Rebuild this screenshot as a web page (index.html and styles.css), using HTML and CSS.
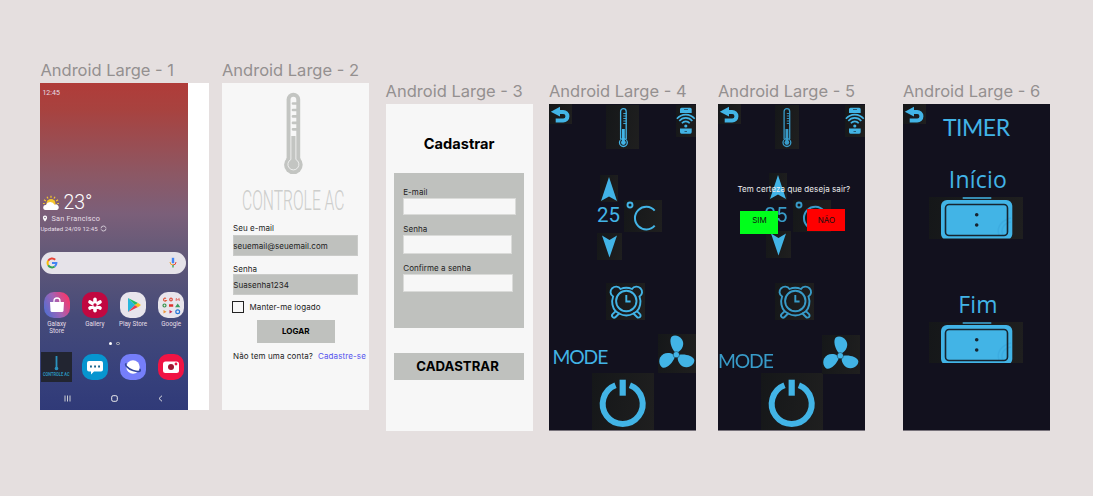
FILE: index.html
```html
<!DOCTYPE html>
<html lang="pt-BR">
<head>
<meta charset="utf-8">
<title>Controle AC</title>
<link rel="stylesheet" href="styles.css">
</head>
<body>
<svg class="defs" aria-hidden="true">
  <symbol id="back" viewBox="0 0 23 20"><path d="M9 8H14.2a4.25 4.25 0 0 1 0 8.500H6.700" fill="none" stroke="currentColor" stroke-width="4"/><path d="M1.800 7.700 11 2.800V12.600Z" fill="currentColor"/></symbol>
  <symbol id="thermo" viewBox="0 0 33 44"><path d="M14.600 34V6.500a2.800 2.800 0 0 1 5.600 0V34" fill="none" stroke="currentColor" stroke-width="1.300"/><circle cx="17.400" cy="37.600" r="3.900" fill="none" stroke="currentColor" stroke-width="1.300"/><circle cx="17.400" cy="37.600" r="2.400" fill="currentColor"/><path d="M17.400 24V37" stroke="currentColor" stroke-width="2.800"/><path d="M17.300 8.500h3M17.300 11h3M17.300 13.500h3M17.300 16h3M17.300 18.500h3" stroke="currentColor" stroke-width=".9"/></symbol>
  <symbol id="remote" viewBox="0 0 20 32"><path d="M4 8V4.200Q4 2.700 5.500 2.700h8.700q1.500 0 1.500 1.500V8ZM4 23.500h11.700V27q0 1.700-1.500 1.700H5.500Q4 28.700 4 27Z" fill="currentColor"/><path d="M8 4.500h4M8.500 26.500h2.500" stroke="#16202a" stroke-width=".6"/><circle cx="9.800" cy="21" r="1.600" fill="currentColor"/><g fill="none" stroke="currentColor" stroke-width="1.600"><path d="M5.900 18.200a5 5 0 0 1 7.800 0M3.300 16a8.300 8.300 0 0 1 13 0M.9 13.800a11.500 11.500 0 0 1 17.800 0"/></g></symbol>
  <symbol id="up" viewBox="0 0 18 27"><path d="M9 2 17 26 9 21.500 1 26Z" fill="currentColor"/></symbol>
  <symbol id="down" viewBox="0 0 25 27"><path d="M5 2.500 12.500 7 20 2.500 12.500 24.500Z" fill="currentColor"/></symbol>
  <symbol id="celsius" viewBox="0 0 38 32"><circle cx="6" cy="5" r="2.500" fill="none" stroke="currentColor" stroke-width="1.900"/><path d="M30.700 10.600A11.300 11.300 0 1 0 30.700 25.600" fill="none" stroke="currentColor" stroke-width="2"/></symbol>
  <symbol id="alarm" viewBox="0 0 39 37"><g fill="none" stroke="currentColor" stroke-width="1.900"><circle cx="20.300" cy="18" r="10.200"/><path d="M14.500 6A14 14 0 0 1 26 6C28 3 32 3 34.400 5.200 37 8 36.500 11.500 33.500 13.500 35.500 19 34 25 31 28.200L34 31.200A2 2 0 0 1 31 34L27.500 30.500A15 15 0 0 1 13.100 30.500L9.600 34A2 2 0 0 1 6.600 31.200L9.600 28.200C6.600 25 5.100 19 7.100 13.500 4.100 11.500 3.600 8 6.200 5.200 8.600 3 12.600 3 14.500 6Z"/><path d="M20.300 12V18.500H24.600"/><path d="M9.600 28.200 13.100 30.500M31 28.200 27.500 30.500"/></g></symbol>
  <symbol id="fan" viewBox="0 0 38 39"><g fill="currentColor"><circle cx="18.300" cy="20.700" r="2.900"/><path id="blade" d="M17 18.200C13 14 10.800 5.500 13.800 2.500 16.500.5 21.500 1.500 24 5.500 26.800 10 24.500 15.500 20 18.200Z"/><use href="#blade" transform="rotate(120 18.300 20.700)"/><use href="#blade" transform="rotate(240 18.300 20.700)"/></g><circle cx="18.300" cy="20.700" r="3.200" fill="none" stroke="#1d3b48" stroke-width=".5"/></symbol>
  <symbol id="power" viewBox="0 0 62 58"><path d="M37.900 12.300A20 20 0 1 1 23.500 12.300" fill="none" stroke="currentColor" stroke-width="6"/><path d="M30.700 6.700v16" stroke="currentColor" stroke-width="6.200"/></symbol>
  <symbol id="clock" viewBox="0 0 94 41.500"><path d="M33.700 1h28.600" stroke="currentColor" stroke-width="1.400"/><rect x="12" y="3" width="71.300" height="40" rx="6" fill="currentColor"/><path d="M70 38C67 30 73 23 82 21M74 38C71 32 75 26 82 25" fill="none" stroke="#3dace0" stroke-width="1.500"/><rect x="16.500" y="7.500" width="62" height="31" rx="3.500" fill="none" stroke="#172530" stroke-width="1.600"/><circle cx="47.700" cy="17.700" r="1.800" fill="#172530"/><circle cx="47.700" cy="28" r="1.800" fill="#172530"/></symbol>
</svg>

<main class="canvas">
  <section class="frame frame-1">
    <h2 class="frame-name">Android Large - 1</h2>
    <div class="screen phone"><div class="wallpaper">
      <div class="status">12:45</div>
      <div class="weather"><svg width="18" height="16" viewBox="0 0 18 16"><circle cx="9" cy="8.500" r="4.500" fill="#f6c72d"/><path d="M9 .7v2M5 1.700l1 1.800M13 1.700l-1 1.800M2 4.700l1.800 1.200M16 4.700l-1.800 1.200M1 8.500h1.800M15.200 8.500H17" stroke="#f6c72d" stroke-width="1.200"/><path d="M3.500 15a2.500 2.500 0 0 1 .4-5 4.700 4.700 0 0 1 8.600-.3A2.700 2.700 0 0 1 15 15Z" fill="#fff"/></svg><span>23°</span></div>
      <div class="place"><svg width="6" height="7" viewBox="0 0 6 7"><path d="M3 .5a2.100 2.100 0 0 0-2.100 2.200C.9 4.300 3 6.500 3 6.500s2.100-2.200 2.100-3.800A2.100 2.100 0 0 0 3 .5Z" fill="#fff"/><circle cx="3" cy="2.600" r=".8" fill="#796078"/></svg><span>San Francisco</span></div>
      <div class="updated"><span>Updated 24/09 12:45</span><svg width="7" height="7" viewBox="0 0 7 7"><circle cx="3.500" cy="3.500" r="2.500" fill="none" stroke="#e6dfe7" stroke-width=".8" stroke-dasharray="6.800 1.050"/></svg></div>
      <div class="search">
        <svg width="12" height="12" viewBox="0 0 12 12" fill="none" stroke-width="2"><path d="M9.200 2.700A4.400 4.400 0 0 0 2.200 3.800" stroke="#e84335"/><path d="M2.200 3.800a4.400 4.400 0 0 0 0 4.400" stroke="#fabc05"/><path d="M2.200 8.200a4.400 4.400 0 0 0 6.500 1.300" stroke="#34a353"/><path d="M8.700 9.500A4.400 4.400 0 0 0 10.400 6H6" stroke="#4285f4"/></svg>
        <svg width="8" height="11" viewBox="0 0 8 11" fill="none"><path d="M4 .8v5.400" stroke="#4285f4" stroke-width="2.400"/><path d="M1 5a3 3 0 0 0 3 3" stroke="#f0a32c"/><path d="M4 8a3 3 0 0 0 3-3" stroke="#e84335"/><path d="M4 8v2.500" stroke="#34a853" stroke-width="1.300"/></svg>
      </div>
      <div class="apps">
        <div class="app"><span class="icon store"><svg width="26" height="26" viewBox="0 0 26 26"><path d="M6 10h14l-.5 8.500Q19.400 20 18 20H8q-1.400 0-1.500-1.500Z" fill="#fff"/><path d="M10 10.500V9a3 3 0 0 1 6 0v1.500" fill="none" stroke="#fff" stroke-width="1.300"/></svg></span>Galaxy<br>Store</div>
        <div class="app"><span class="icon gallery"><svg width="26" height="26" viewBox="0 0 26 26"><path d="M13 7.300v11.400M8 10l10 6M8 16l10-6" stroke="#fff" stroke-width="3.600" stroke-linecap="round"/><circle cx="13" cy="13" r="1.700" fill="#c10840"/></svg></span>Gallery</div>
        <div class="app"><span class="icon light"><svg width="26" height="26" viewBox="0 0 26 26"><path d="M8 6v14l7-7Z" fill="#27b6dc"/><path d="M8 6l10 5-3 2Z" fill="#22bd6c"/><path d="M8 20l10-5-3-2Z" fill="#e93c50"/><path d="M18 11l3 2-3 2.200L14.800 13Z" fill="#fabf20"/></svg></span>Play Store</div>
        <div class="app"><span class="icon light"><svg width="26" height="26" viewBox="0 0 26 26" fill="none" stroke-width="1.200"><path d="M8 6.500a1.500 1.500 0 1 0 .3 2H7" stroke="#e05a3d"/><circle cx="13" cy="7.500" r="1.300" stroke="#df5040"/><path d="M18.200 9V6.500l1.500 1.300 1.500-1.300V9" stroke="#d94a40" stroke-width=".8"/><circle cx="6.500" cy="13.500" r="1.500" stroke="#35924a"/><path d="M11 13.500h4.200" stroke="#e0302d" stroke-width="2.600"/><path d="M18.200 14.700l1.500-2.200 1.500 2.200Z" stroke="#3c9c62"/><path d="M5.500 18l3 1.700-3 1.700Z" fill="#ec943a"/><path d="M11.500 18l3 1.700-3 1.700Z" fill="#c42654"/><circle cx="19.700" cy="19.700" r="1.900" stroke="#2676d9"/></svg></span>Google</div>
      </div>
      <div class="pages"><i></i><i class="off"></i></div>
      <div class="dock">
        <span class="ac"><svg width="31" height="30" viewBox="0 0 31 30"><path d="M15.500 4v14" stroke="#2b91bd" stroke-width="1.800"/><circle cx="15.500" cy="16.500" r="1.800" fill="#2b91bd"/><text x="2" y="23.500" textLength="26.500" lengthAdjust="spacingAndGlyphs">CONTROLE AC</text></svg></span>
        <span class="icon chat"><svg width="26" height="26" viewBox="0 0 26 26"><path d="M7 7h12q2 0 2 2v6.500q0 2-2 2h-7L9 20.500v-3H7q-2 0-2-2V9q0-2 2-2Z" fill="#fff"/><path d="M8 12.500h1.900M12.100 12.500H14M16.100 12.500H18" stroke="#18658d" stroke-width="1.900"/></svg></span>
        <span class="icon planet"><svg width="26" height="26" viewBox="0 0 26 26"><circle cx="13" cy="13" r="6.700" fill="#fff"/><path d="M6.500 9.500C3.500 10 8 15 13 16.500S22 18 19.700 15" fill="none" stroke="#35479d" stroke-width="1.500"/></svg></span>
        <span class="icon camera"><svg width="26" height="26" viewBox="0 0 26 26"><rect x="5" y="7.500" width="16" height="11.500" rx="2.500" fill="#fff"/><circle cx="13" cy="13" r="3" fill="#9f1732"/><circle cx="18" cy="10" r="1.400" fill="#e61845"/></svg></span>
      </div>
      <div class="nav"><svg width="7" height="7" viewBox="0 0 7 7"><path d="M1 .5v6M3.500.5v6M6 .5v6" stroke="#ddd" stroke-width=".9"/></svg><svg width="7" height="7" viewBox="0 0 7 7"><rect x=".7" y=".7" width="5.600" height="5.600" rx="1.500" fill="none" stroke="#eee"/></svg><svg width="7" height="7" viewBox="0 0 7 7"><path d="M5 .7 2 3.500 5 6.300" fill="none" stroke="#eee" stroke-width=".9"/></svg></div>
    </div></div>
  </section>

  <section class="frame frame-2">
    <h2 class="frame-name">Android Large - 2</h2>
    <div class="screen login">
      <svg class="logo" width="110" height="122" viewBox="0 0 110 122"><g fill="#c3c5c2"><path d="M44.600 75V8.500a6.800 6.800 0 0 1 13.600 0V75Z"/><circle cx="51.400" cy="73.800" r="9.300"/></g><path d="M48.500 45V8.700a2.900 2.900 0 0 1 5.800 0V45Z" fill="#f7f7f7"/><path d="M55 12.500h-4M55 19h-4M55 25.400h-4M55 31.900h-4M55 38.300h-4" stroke="#c3c5c2" stroke-width="2.700" stroke-linecap="round"/><path d="M48.900 45V68.500a5.500 5.500 0 1 0 5 0V45" fill="none" stroke="#f7f7f7" stroke-width=".8"/><text x="0" y="118.500" textLength="102.500" lengthAdjust="spacingAndGlyphs">CONTROLE AC</text></svg>
      <label class="first">Seu e-mail</label><div class="field">seuemail@seuemail.com</div>
      <label>Senha</label><div class="field">Suasenha1234</div>
      <div class="remember"><i></i><span>Manter-me logado</span></div>
      <div class="enter">LOGAR</div>
      <p class="signup"><span>Não tem uma conta?</span><a>Cadastre-se</a></p>
    </div>
  </section>

  <section class="frame frame-3">
    <h2 class="frame-name">Android Large - 3</h2>
    <div class="screen register">
      <h1>Cadastrar</h1>
      <div class="panel">
        <label>E-mail</label><div class="input email"></div>
        <label>Senha</label><div class="input password"></div>
        <label>Confirme a senha</label><div class="input confirm"></div>
      </div>
      <div class="submit">CADASTRAR</div>
    </div>
  </section>

  <section class="frame frame-4">
    <h2 class="frame-name">Android Large - 4</h2>
    <div class="screen dark">
      <div class="top"><svg class="tile t-back"><use href="#back"/></svg><svg class="tile t-thermo"><use href="#thermo"/></svg><svg class="tile t-remote"><use href="#remote"/></svg></div>
      <div class="temp"><svg class="tile t-up"><use href="#up"/></svg><div class="value"><span>25</span><svg class="tile t-c"><use href="#celsius"/></svg></div><svg class="tile t-down"><use href="#down"/></svg></div>
      <svg class="tile t-alarm"><use href="#alarm"/></svg>
      <div class="mode"><span>MODE</span><svg class="tile t-fan"><use href="#fan"/></svg></div>
      <svg class="tile t-power"><use href="#power"/></svg>
    </div>
  </section>

  <section class="frame frame-5">
    <h2 class="frame-name">Android Large - 5</h2>
    <div class="screen dark">
      <div class="behind">
      <div class="top"><svg class="tile t-back"><use href="#back"/></svg><svg class="tile t-thermo" viewBox="5.500 0 23.500 44"><use href="#thermo" width="33" height="44"/></svg><svg class="tile t-remote"><use href="#remote"/></svg></div>
      <div class="temp"><svg class="tile t-up"><use href="#up"/></svg><div class="value"><span>25</span><svg class="tile t-c"><use href="#celsius"/></svg></div><svg class="tile t-down"><use href="#down"/></svg></div>
      <svg class="tile t-alarm"><use href="#alarm"/></svg>
      <div class="mode"><span>MODE</span><svg class="tile t-fan"><use href="#fan"/></svg></div>
      <svg class="tile t-power"><use href="#power"/></svg>
      </div>
      <div class="dialog"><p>Tem certeza que deseja sair?</p><div class="answers"><span class="yes">SIM</span><span class="no">NÃO</span></div></div>
    </div>
  </section>

  <section class="frame frame-6">
    <h2 class="frame-name">Android Large - 6</h2>
    <div class="screen dark">
      <div class="timer-head"><svg class="tile t-back"><use href="#back"/></svg><h1>TIMER</h1></div>
      <h3 class="start">Início</h3><svg class="tile t-clock"><use href="#clock"/></svg>
      <h3 class="end">Fim</h3><svg class="tile t-clock"><use href="#clock"/></svg>
    </div>
  </section>
</main>
</body>
</html>
```
FILE: styles.css
```css
* { box-sizing: border-box; }
body { margin: 0; background: #e5dfdf; font-family: Inter, sans-serif; }
h1, h2, h3, p { margin: 0; font-weight: 400; }
svg { display: block; flex: none; }
.defs { position: absolute; width: 0; height: 0; }
.canvas { display: flex; align-items: flex-start; width: 1093px; height: 496px; padding: 60px 0 0 40.4px; overflow: hidden; }
.frame { flex: none; width: 147px; }
.frame-1 { width: 168.500px; margin-right: 13.100px; }
.frame-2 { margin-right: 16.600px; }
.frame-3, .frame-4, .frame-5, .frame-6 { padding-top: 21.500px; }
.frame-3 { margin-right: 16.400px; }
.frame-4 { margin-right: 22px; }
.frame-5 { margin-right: 38px; }
.frame-name { height: 22.600px; line-height: 20px; font-size: 16.500px; color: #949090; white-space: nowrap; }
.frame-3 .frame-name, .frame-4 .frame-name, .frame-5 .frame-name, .frame-6 .frame-name { height: 22.500px; line-height: 18px; }
.screen { height: 327px; overflow: hidden; }

/* home screen */
.phone { background: #fff; font-family: Roboto, sans-serif; color: #e6dfe7; }
.wallpaper { width: 147.300px; height: 327px; overflow: hidden; background: linear-gradient(#b03c39, #a8423f 8%, #8c5865 28%, #7b5f79 40%, #635978 52%, #454a79 72%, #36407b 90%, #303a78); }
.status { padding: 6px 0 0 2px; font-size: 7px; line-height: 9px; }
.weather { display: flex; align-items: center; gap: 3px; height: 22px; margin: 94px 0 0 2px; font-size: 19.500px; font-weight: 300; color: #fff; }
.place { display: flex; align-items: center; gap: 3px; height: 10px; margin-left: 2px; font-size: 7.300px; letter-spacing: .24px; }
.updated { display: flex; align-items: center; gap: 2px; height: 10px; font-size: 6.100px; white-space: nowrap; }
.search { display: flex; align-items: center; justify-content: space-between; width: 145px; height: 21.500px; margin: 18.500px 1px 0; padding: 0 9px 0 5px; border-radius: 11px; background: #e6e3e9; }
.apps, .dock { display: grid; grid-template-columns: repeat(4, 38.200px); margin-left: -2.800px; }
.apps { height: 45px; margin-top: 18px; }
.app { display: flex; flex-direction: column; align-items: center; font-size: 6.300px; line-height: 7px; text-align: center; }
.icon { display: block; flex: none; width: 26px; height: 26px; margin-bottom: 3px; border-radius: 10px; overflow: hidden; }
.store { background: linear-gradient(65deg, #4c6fd2 5%, #a263b5 50%, #ef3b72 85%); }
.gallery { background: #c10840; }
.light { background: #e8e5ec; }
.chat { background: #0795cf; }
.planet { background: #757efa; }
.camera { background: #f01444; }
.pages { display: flex; gap: 4px; padding: 5px 0 0 68.500px; height: 15px; }
.pages i { width: 3.500px; height: 3.500px; border-radius: 50%; background: #fff; }
.pages .off { border: .8px solid #bbb; background: none; }
.dock { height: 31px; align-items: center; justify-items: center; }
.dock .icon { margin: 0; }
.ac { width: 31px; height: 30px; background: #222531; }
.ac text { font: 700 5.500px Roboto, sans-serif; fill: #2b91bd; }
.nav { display: flex; justify-content: space-between; padding: 12.500px 24px 0 24px; }

/* login */
.login { background: #f7f7f7; padding: 8.500px 0 0 11px; font-size: 8px; color: #222; }
.logo { margin-left: 9px; }
.logo text { font: 300 27.500px Roboto, sans-serif; fill: #cdcecc; }
.login label { display: block; height: 9px; line-height: 9px; margin-top: 8.500px; letter-spacing: .06px; }
.login .first { height: 11px; margin: 10.500px 0 0; }
.field { width: 125px; height: 21.500px; line-height: 21px; background: #bfc1be; border: .5px solid #cacbc9; white-space: nowrap; text-indent: -.7px; letter-spacing: .04px; }
.remember { display: flex; align-items: center; gap: 5.500px; height: 12px; margin: 6px 0 0 -1px; letter-spacing: .09px; }
.remember i { width: 12px; height: 12px; border: 1.500px solid #222; }
.enter { width: 78px; height: 23px; margin: 6.500px 0 0 23.700px; background: #bfc1be; font-weight: 700; line-height: 23px; text-align: center; color: #000; }
.signup { display: flex; gap: 5px; margin-top: 7px; line-height: 12px; white-space: nowrap; letter-spacing: .12px; }
.signup a { color: #5554ee; }

/* sign-up */
.register { background: #f7f7f7; padding: 30px 8.500px 0; color: #000; }
.register h1 { font-size: 14.600px; line-height: 20px; font-weight: 700; text-align: center; }
.panel { height: 155px; margin-top: 19px; padding: 14px 9px 0; background: #bfc1be; }
.panel label { display: block; height: 11px; line-height: 10px; font-size: 8px; color: #222; text-indent: .2px; letter-spacing: .05px; }
.input { background: #f7f7f7; border: .5px solid #dadbd9; }
.email { width: 112.500px; height: 17px; margin-bottom: 9px; }
.password { width: 109px; height: 18.500px; margin-bottom: 9px; }
.confirm { width: 110px; height: 18px; }
.submit { height: 27px; margin-top: 25px; padding-right: 3px; background: #bfc1be; font-weight: 700; font-size: 13.200px; line-height: 27px; text-align: center; }

/* remote control */
.dark { background: #12111e; color: #42b4e6; font-family: Lato, sans-serif; border-bottom: 1px solid #77727a; }
.tile { background: linear-gradient(100deg, #151719, #1f1f1f); }
.t-back { width: 23px; height: 20px; }
.t-thermo { width: 33px; height: 44px; margin: 1px 0 0 34px; }
.t-remote { width: 20px; height: 32px; margin: 1px 0 0 auto; }
.top { display: flex; height: 71px; }
.t-up { width: 18px; height: 27px; margin-left: 51.500px; }
.value { display: flex; height: 31px; margin: -2px 0 0 48px; }
.value span { width: 27.500px; padding-top: 5px; font-size: 20.500px; line-height: 20px; font-family: Roboto, sans-serif; }
.t-c { width: 38px; height: 32px; }
.t-down { width: 25px; height: 27px; margin: 2px 0 0 48px; }
.t-alarm { width: 39px; height: 37px; margin: 23px 0 0 57.300px; }
.mode { display: flex; justify-content: space-between; height: 39px; margin-top: 14px; }
.mode span { padding: 11px 0 0 3.500px; font-size: 19.300px; line-height: 24px; letter-spacing: -1.100px; }
.t-fan { width: 38px; height: 39px; }
.t-power { width: 62px; height: 58px; margin-left: 43px; }

/* exit confirmation over the remote */
.frame-5 .dark { position: relative; }
.behind { filter: blur(.45px); }
.frame-5 .t-thermo, .frame-5 .t-alarm, .frame-5 .t-c, .frame-5 .value span, .frame-5 .mode span { color: #389bc8; }
.frame-5 .t-thermo { width: 23.500px; margin-left: 34.500px; }
.frame-5 .top { height: 69px; }
.frame-5 .value { margin: 0 0 0 46.500px; }
.frame-5 .value span { width: 29px; }
.frame-5 .t-down { margin: 0 0 0 48px; }
.frame-5 .t-alarm { margin-top: 25px; }
.frame-5 .mode span { padding: 15px 0 0; }
.frame-5 .t-fan { margin: 1px 4.500px 0 0; }
.dialog { position: absolute; left: 0; right: 0; top: 79px; font: 8px/12px Inter, sans-serif; color: #eee; }
.dialog p { padding-left: 19.500px; white-space: nowrap; letter-spacing: .08px; }
.answers { display: flex; justify-content: space-between; margin: 14px 19.500px 0 22.500px; color: #111; text-align: center; line-height: 22px; }
.answers span { width: 38px; height: 22px; }
.answers .yes { height: 23px; margin-top: 2px; background: #00ff1b; line-height: 19px; }
.no { background: #f00; }

/* timer */
.timer-head { display: flex; height: 60px; }
.timer-head h1 { margin: 8px 0 0 17px; font-size: 23px; line-height: 30px; letter-spacing: -.5px; }
.dark h3 { font-family: "Open Sans", sans-serif; font-size: 23px; line-height: 31px; text-align: center; height: 33px; padding-left: 3px; letter-spacing: .2px; }
.t-clock { width: 94px; height: 41.500px; margin-left: 26.300px; }
.dark .end { margin-top: 50px; }
```
